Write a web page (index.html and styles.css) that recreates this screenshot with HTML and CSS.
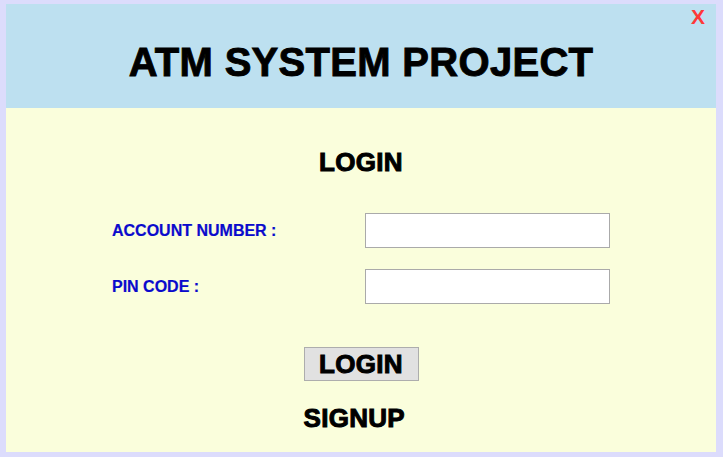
FILE: index.html
```html
<!DOCTYPE html>
<html>
<head>
<meta charset="utf-8">
<link rel="stylesheet" href="styles.css">
</head>
<body>
<div class="window">
  <header class="header">
    <h1 class="title">ATM SYSTEM PROJECT</h1>
    <span class="close">X</span>
  </header>
  <main class="content">
    <h2 class="heading">LOGIN</h2>
    <div class="form">
      <label class="label">ACCOUNT NUMBER :</label>
      <input class="field" type="text">
      <label class="label">PIN CODE :</label>
      <input class="field" type="password">
    </div>
    <div class="actions">
      <button class="btn">LOGIN</button>
      <div class="signup">SIGNUP</div>
    </div>
  </main>
</div>
</body>
</html>
```
FILE: styles.css
```css
html, body {
  margin: 0;
  padding: 0;
  background: #dcdcfc;
  height: 100%;
}
body {
  padding: 4px 7px 5px 6px;
  box-sizing: border-box;
  font-family: "Liberation Sans", Arial, sans-serif;
}
.window {
  display: flex;
  flex-direction: column;
  height: 448px;
  width: 710px;
}
.header {
  position: relative;
  height: 104px;
  box-sizing: border-box;
  background: #bde0f0;
  padding-top: 38px;
}
.title {
  margin: 0;
  text-align: center;
  font-size: 40px;
  line-height: 40px;
  font-weight: bold;
  letter-spacing: 0.3px;
  color: #000;
  -webkit-text-stroke: 0.9px #000;
}
.close {
  position: absolute;
  top: 2px;
  right: 11px;
  font-size: 21px;
  line-height: 21px;
  font-weight: bold;
  color: #ff3838;
}
.content {
  flex: 1;
  background: #fafedc;
  padding-top: 41px;
}
.heading {
  margin: 0;
  text-align: center;
  font-size: 26px;
  line-height: 26px;
  font-weight: bold;
  letter-spacing: 0.3px;
  color: #000;
  -webkit-text-stroke: 1px #000;
}
.form {
  display: grid;
  grid-template-columns: 253px 245px;
  grid-auto-rows: 35px;
  row-gap: 21px;
  align-items: center;
  margin-top: 38px;
  padding-left: 106px;
}
.label {
  font-size: 16px;
  font-weight: bold;
  color: #0a0acc;
  -webkit-text-stroke: 0.2px #0a0acc;
}
.field {
  height: 35px;
  width: 245px;
  box-sizing: border-box;
  border: 1px solid #aaaaaa;
  background: #fff;
  margin: 0;
  padding: 0 4px;
}
.actions {
  width: 115px;
  margin: 43px auto 0;
  display: flex;
  flex-direction: column;
  align-items: flex-start;
}
.btn {
  width: 115px;
  height: 34px;
  margin: 0;
  padding: 0;
  background: #e1e1e1;
  border: 1px solid #adadad;
  font-family: "Liberation Sans", Arial, sans-serif;
  font-size: 26px;
  line-height: 32px;
  font-weight: bold;
  letter-spacing: 0.3px;
  color: #000;
  -webkit-text-stroke: 1px #000;
}
.signup {
  margin-top: 24px;
  font-size: 26px;
  line-height: 26px;
  font-weight: bold;
  letter-spacing: 0.3px;
  color: #000;
  -webkit-text-stroke: 1px #000;
  white-space: nowrap;
}
```
